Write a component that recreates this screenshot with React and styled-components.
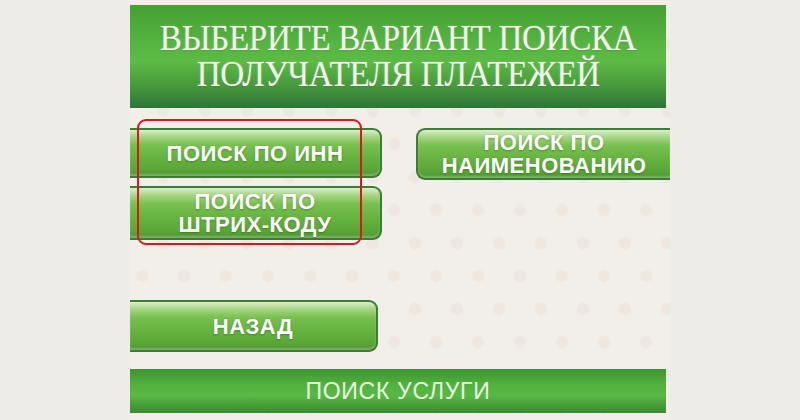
import React from 'react';
import styled, { createGlobalStyle } from 'styled-components';

const GlobalStyle = createGlobalStyle`
  html, body {
    margin: 0;
    padding: 0;
    background: #eeece8;
  }
  body {
    font-family: "Liberation Sans", Arial, sans-serif;
  }
`;

const Page = styled.div`
  width: 800px;
  height: 420px;
  overflow: hidden;
  display: flex;
`;

const Screen = styled.div`
  position: relative;
  margin-left: 130px;
  width: 540px;
  height: 420px;
  padding-top: 5px;
  box-sizing: border-box;
  display: flex;
  flex-direction: column;
  background-color: #f2efea;
  background-image:
    radial-gradient(circle, rgba(226, 214, 198, 0.28) 5.5px, transparent 7px),
    radial-gradient(circle, rgba(226, 214, 198, 0.28) 5.5px, transparent 7px);
  background-size: 42px 66px, 42px 66px;
  background-position: 12px 12px, 33px 45px;
`;

const Header = styled.div`
  width: 536px;
  height: 103px;
  display: flex;
  flex-direction: column;
  align-items: center;
  justify-content: center;
  background: linear-gradient(
    to bottom,
    #44a033 0%,
    #55b340 35%,
    #5cba45 55%,
    #479a3b 78%,
    #2d743a 100%
  );
  color: #f1f7ea;
  font-family: "Liberation Serif", "Times New Roman", serif;
  font-size: 35px;
  line-height: 36px;
  letter-spacing: -0.3px;
  text-shadow: 0 0 2px rgba(255, 255, 255, 0.35), 0 1px 1px rgba(0, 0, 0, 0.2);
`;

const HeaderLine = styled.div`
  transform: scaleX(0.945);
  white-space: nowrap;
`;

const Body = styled.div`
  display: flex;
  justify-content: space-between;
  margin-top: 20px;
`;

const Column = styled.div`
  display: flex;
  flex-direction: column;
  gap: 8px;
  align-items: ${(p) => (p.$right ? 'flex-end' : 'flex-start')};
`;

const Button = styled.div`
  box-sizing: border-box;
  width: ${(p) => p.$width}px;
  height: ${(p) => p.$height}px;
  display: flex;
  flex-direction: column;
  align-items: center;
  justify-content: center;
  color: #ffffff;
  font-weight: 700;
  font-size: 22px;
  line-height: 23px;
  letter-spacing: 0.5px;
  text-align: center;
  text-shadow: 0 1px 2px rgba(40, 80, 20, 0.45);
  border: 2px solid #3b7d33;
  border-${(p) => (p.$right ? 'right' : 'left')}: none;
  border-radius: ${(p) => (p.$right ? '9px 0 0 9px' : '0 9px 9px 0')};
  background: linear-gradient(
    to bottom,
    #dcefcc 0%,
    #a8d686 14%,
    #78c050 32%,
    #66b340 60%,
    #5aa738 85%,
    #4e9631 100%
  );
  box-shadow: inset 0 -2px 2px rgba(255, 255, 255, 0.25);
`;

const BackRow = styled.div`
  margin-top: 60px;
`;

const Footer = styled.div`
  margin-top: 17px;
  width: 536px;
  height: 44px;
  display: flex;
  align-items: center;
  justify-content: center;
  color: #e9f4e2;
  font-size: 23px;
  letter-spacing: 0.7px;
  background: linear-gradient(
    to bottom,
    #3a952f 0%,
    #52b13e 35%,
    #5ab845 60%,
    #449c37 85%,
    #3a8a33 100%
  );
`;

const Highlight = styled.div`
  position: absolute;
  left: 7px;
  top: 119px;
  width: 225px;
  height: 126px;
  box-sizing: border-box;
  border: 2.5px solid #e0141c;
  border-radius: 9px;
  pointer-events: none;
`;

export default function App() {
  return (
    <>
      <GlobalStyle />
      <Page>
        <Screen>
          <Header>
            <HeaderLine>ВЫБЕРИТЕ ВАРИАНТ ПОИСКА</HeaderLine>
            <HeaderLine>ПОЛУЧАТЕЛЯ ПЛАТЕЖЕЙ</HeaderLine>
          </Header>
          <Body>
            <Column>
              <Button $width={252} $height={50}>ПОИСК ПО ИНН</Button>
              <Button $width={252} $height={54}>
                <span>ПОИСК ПО</span>
                <span>ШТРИХ-КОДУ</span>
              </Button>
            </Column>
            <Column $right>
              <Button $right $width={254} $height={52}>
                <span>ПОИСК ПО</span>
                <span>НАИМЕНОВАНИЮ</span>
              </Button>
            </Column>
          </Body>
          <BackRow>
            <Button $width={248} $height={52}>НАЗАД</Button>
          </BackRow>
          <Footer>ПОИСК УСЛУГИ</Footer>
          <Highlight />
        </Screen>
      </Page>
    </>
  );
}
